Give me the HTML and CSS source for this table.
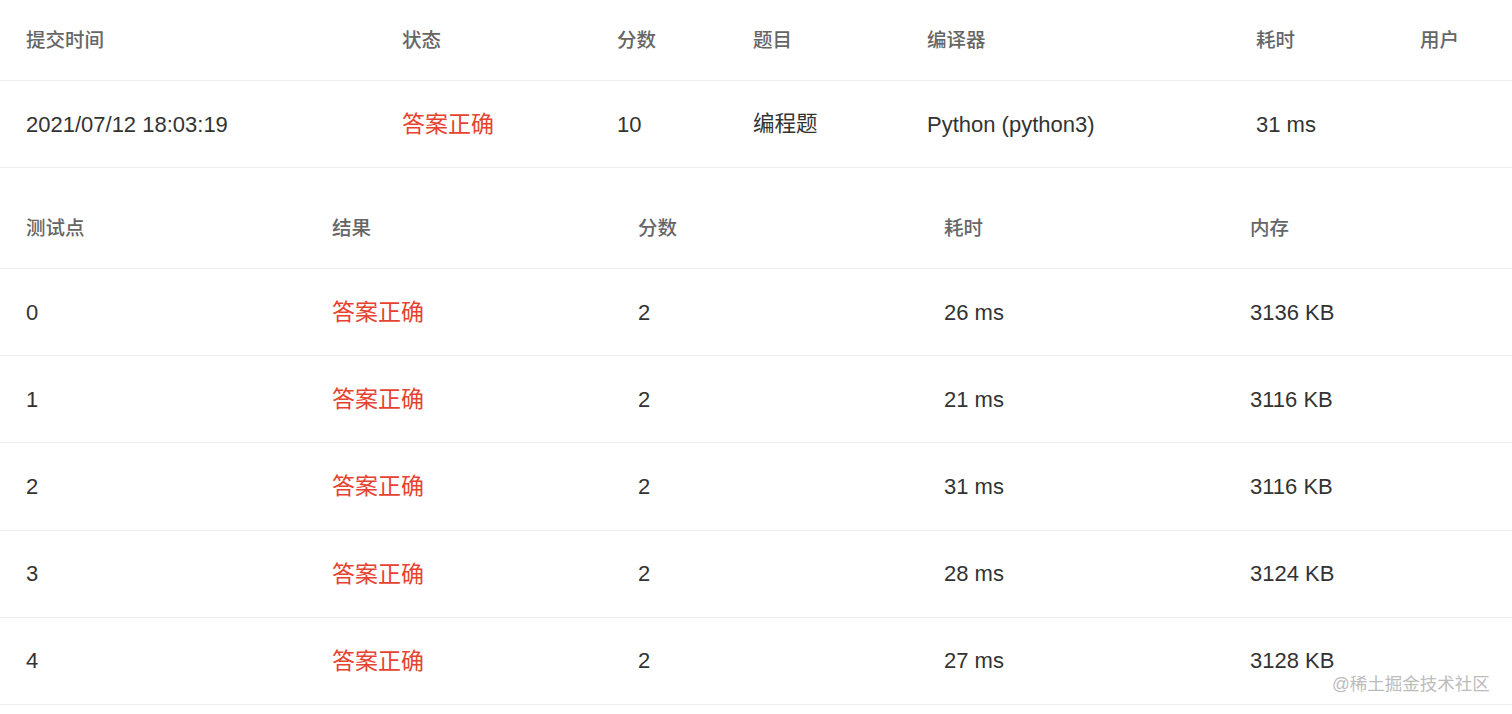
FILE: index.html
```html
<!DOCTYPE html>
<html lang="zh-CN">
<head>
<meta charset="utf-8">
<title>提交详情</title>
<link rel="stylesheet" href="styles.css">
</head>
<body>
<div class="page">
  <div class="table summary">
    <div class="row head">
      <div class="cell">提交时间</div>
      <div class="cell">状态</div>
      <div class="cell">分数</div>
      <div class="cell">题目</div>
      <div class="cell">编译器</div>
      <div class="cell">耗时</div>
      <div class="cell">用户</div>
    </div>
    <div class="row body">
      <div class="cell">2021/07/12 18:03:19</div>
      <div class="cell zh ok">答案正确</div>
      <div class="cell">10</div>
      <div class="cell zh plain">编程题</div>
      <div class="cell">Python (python3)</div>
      <div class="cell">31 ms</div>
      <div class="cell"></div>
    </div>
  </div>

  <div class="table cases">
    <div class="row head">
      <div class="cell">测试点</div>
      <div class="cell">结果</div>
      <div class="cell">分数</div>
      <div class="cell">耗时</div>
      <div class="cell">内存</div>
    </div>
    <div class="row body">
      <div class="cell">0</div>
      <div class="cell zh ok">答案正确</div>
      <div class="cell">2</div>
      <div class="cell">26 ms</div>
      <div class="cell">3136 KB</div>
    </div>
    <div class="row body">
      <div class="cell">1</div>
      <div class="cell zh ok">答案正确</div>
      <div class="cell">2</div>
      <div class="cell">21 ms</div>
      <div class="cell">3116 KB</div>
    </div>
    <div class="row body">
      <div class="cell">2</div>
      <div class="cell zh ok">答案正确</div>
      <div class="cell">2</div>
      <div class="cell">31 ms</div>
      <div class="cell">3116 KB</div>
    </div>
    <div class="row body">
      <div class="cell">3</div>
      <div class="cell zh ok">答案正确</div>
      <div class="cell">2</div>
      <div class="cell">28 ms</div>
      <div class="cell">3124 KB</div>
    </div>
    <div class="row body">
      <div class="cell">4</div>
      <div class="cell zh ok">答案正确</div>
      <div class="cell">2</div>
      <div class="cell">27 ms</div>
      <div class="cell">3128 KB</div>
    </div>
  </div>
  <div class="watermark">@稀土掘金技术社区</div>
</div>
</body>
</html>
```

FILE: styles.css
```css
html, body {
  margin: 0;
  padding: 0;
  background: #ffffff;
}

body {
  font-family: "Liberation Sans", Arial, "Noto Sans CJK SC", sans-serif;
  color: #333333;
  overflow: hidden;
}

.page {
  position: relative;
  width: 1512px;
  height: 714px;
}

.table {
  display: flex;
  flex-direction: column;
}

.row {
  display: grid;
  align-items: center;
  border-bottom: 1px solid #ededed;
}

.summary .row {
  grid-template-columns: 376px 215px 136px 174px 329px 164px 118px;
}

.cases {
  margin-top: 20px;
}

.cases .row {
  grid-template-columns: 306px 306px 306px 306px 288px;
}

.cell {
  padding-left: 26px;
  white-space: nowrap;
  line-height: 30px;
}

.head {
  height: 80px;
  font-size: 19.5px;
  color: #666666;
  font-weight: 500;
}

.body {
  height: 86.2px;
  font-size: 22px;
  color: #333333;
}

.body .cell {
  padding-top: 1px;
}

.body .zh {
  font-size: 23px;
  padding-top: 0;
}

.body .plain {
  font-size: 21.5px;
}

.summary .body {
  height: 86px;
}

.ok {
  color: #e5432f;
}

.watermark {
  position: absolute;
  left: 1332px;
  top: 672px;
  font-size: 17.5px;
  line-height: 24px;
  color: #bcbcbc;
}
```
